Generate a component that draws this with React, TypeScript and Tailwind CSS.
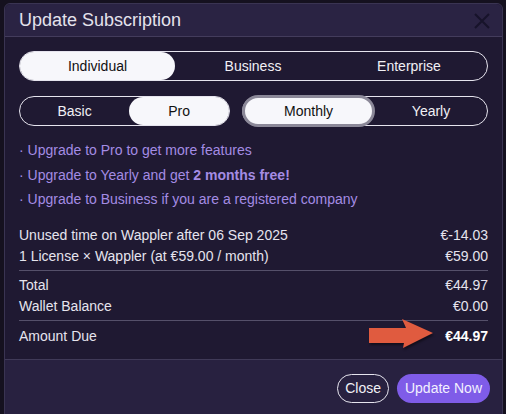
import { useState } from 'react';

const font = { fontFamily: '"Liberation Sans", Arial, sans-serif' };

function Segmented({
  options,
  widths,
  active,
  onChange,
  className,
  focused,
}: {
  options: string[];
  widths?: string[];
  active: string;
  onChange: (v: string) => void;
  className?: string;
  focused?: boolean;
}) {
  return (
    <div className={`flex h-[30px] rounded-full border border-[#e6e4ee] ${className ?? ''}`}>
      {options.map((opt, i) => {
        const isActive = opt === active;
        return (
          <button
            key={opt}
            onClick={() => onChange(opt)}
            className={`${widths ? widths[i] : 'flex-1'} rounded-full text-[14px] leading-none ${
              isActive
                ? `bg-[#f7f7fb] text-[#111] ${focused ? '-my-[2px] -ml-[1px] border-[3px] border-[#8b8898]' : ''}`
                : 'text-[#f1f0f5]'
            }`}
          >
            {opt}
          </button>
        );
      })}
    </div>
  );
}

function Row({ label, value, bold }: { label: string; value: string; bold?: boolean }) {
  return (
    <div className="flex items-center justify-between h-[21px]">
      <span>{label}</span>
      <span className={bold ? 'font-bold text-white' : ''}>{value}</span>
    </div>
  );
}

export default function App() {
  const [type, setType] = useState('Individual');
  const [plan, setPlan] = useState('Pro');
  const [period, setPeriod] = useState('Monthly');

  return (
    <div className="w-[506px] h-[414px] overflow-hidden bg-[#15111f] pt-[3px] pl-[4px]" style={font}>
      <div className="w-[499px] h-[420px] rounded-t-[6px] border border-[#3a3452] bg-[#1f1932] flex flex-col">
        <div className="h-[34px] flex items-center justify-between pl-[14px] pr-[12px] bg-[#2a2343] rounded-t-[6px] border-b border-[#433c5c]">
          <h2 className="text-[18px] text-[#e4e2ec] leading-none">Update Subscription</h2>
          <svg width="16" height="16" viewBox="0 0 16 16" className="mt-[1px]">
            <path d="M1 1 L15 15 M15 1 L1 15" stroke="#17132a" strokeWidth="2" />
          </svg>
        </div>

        <div className="px-[14px] pt-[14px] pb-[12px] text-[14px] text-[#e6e4ee]">
          <Segmented
            options={['Individual', 'Business', 'Enterprise']}
            widths={['w-[155px]', 'flex-1', 'flex-1']}
            active={type}
            onChange={setType}
          />
          <div className="flex gap-[12px] mt-[15px]">
            <Segmented
              className="w-[212px]"
              options={['Basic', 'Pro']}
              widths={['flex-1', 'w-[100px]']}
              active={plan}
              onChange={setPlan}
            />
            <Segmented
              className="w-[247px]"
              options={['Monthly', 'Yearly']}
              widths={['w-[133px]', 'flex-1']}
              active={period}
              onChange={setPeriod}
              focused
            />
          </div>

          <ul className="mt-[12px] text-[#a48ce4] leading-[24.5px]">
            <li>· Upgrade to Pro to get more features</li>
            <li>
              · Upgrade to Yearly and get <b>2 months free!</b>
            </li>
            <li>· Upgrade to Business if you are a registered company</li>
          </ul>

          <div className="mt-[13px]">
            <Row label="Unused time on Wappler after 06 Sep 2025" value="€-14.03" />
            <Row label="1 License × Wappler (at €59.00 / month)" value="€59.00" />
          </div>
          <div className="border-t border-[#55506a] mt-[3px] pt-[4px]">
            <Row label="Total" value="€44.97" />
            <Row label="Wallet Balance" value="€0.00" />
          </div>
          <div className="border-t border-[#55506a] mt-[3px] pt-[5px] relative">
            <Row label="Amount Due" value="€44.97" bold />
            <svg
              width="70"
              height="38"
              viewBox="0 0 70 38"
              className="absolute left-[349px] top-[-2px]"
            >
              <polygon
                points="1,9 38,9 34,0 65,14 35,29 36,24 1,24"
                fill="#e05b3f"
                style={{ filter: 'drop-shadow(1px 2px 1px rgba(0,0,0,0.45))' }}
              />
            </svg>
          </div>
        </div>

        <div className="mt-auto h-[61px] bg-[#282140] border-t border-[#403a58] flex items-start justify-end gap-[8px] pt-[14px] pr-[12px] mb-[3px]">
          <button className="h-[29px] px-[7px] rounded-full border border-[#e6e4ee] text-[14px] text-[#f1f0f5]">
            Close
          </button>
          <button className="h-[29px] px-[8px] rounded-full bg-[#7f5ce8] text-[14px] text-[#f3f0ff]">
            Update Now
          </button>
        </div>
      </div>
    </div>
  );
}
